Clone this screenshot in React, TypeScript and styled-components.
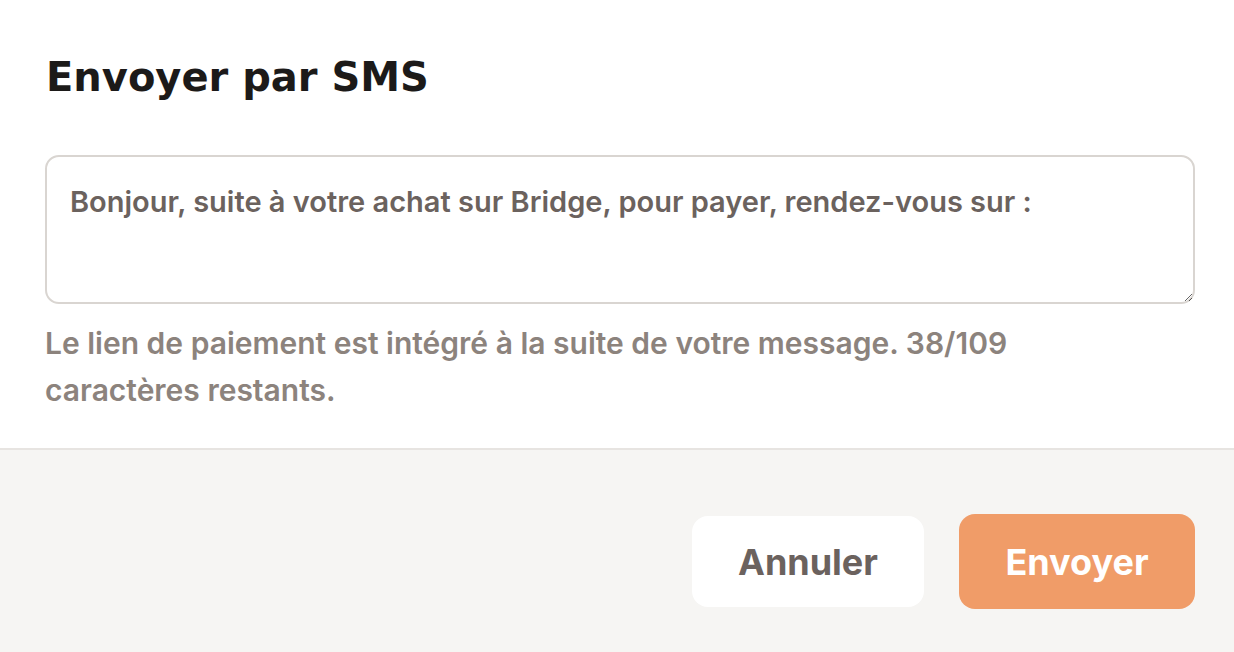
import styled, { createGlobalStyle } from "styled-components";

const GlobalStyle = createGlobalStyle`
  html, body {
    margin: 0;
    padding: 0;
    background: #ffffff;
  }
  body {
    font-family: Inter, "Noto Sans", "Liberation Sans", sans-serif;
  }
  * {
    box-sizing: border-box;
  }
`;

const Modal = styled.div`
  width: 1234px;
  height: 652px;
  display: flex;
  flex-direction: column;
  background: #ffffff;
  overflow: hidden;
`;

const Body = styled.div`
  display: flex;
  flex-direction: column;
  padding: 51px 39px 0 45px;
  height: 450px;
  border-bottom: 2px solid #e7e4e1;
`;

const Title = styled.h1`
  margin: 0 0 52px 1px;
  font-family: "DejaVu Sans", Inter, sans-serif;
  font-size: 40px;
  line-height: 52px;
  font-weight: 700;
  color: #1c1a19;
`;

const MessageBox = styled.textarea`
  width: 100%;
  height: 149px;
  padding: 25px 23px;
  border: 2px solid #d9d5d1;
  border-radius: 14px;
  font-family: inherit;
  font-size: 29px;
  line-height: 40px;
  font-weight: 600;
  color: #6b625e;
  background: #ffffff;
  resize: vertical;
  &:focus {
    outline: none;
    border-color: #f09c68;
  }
`;

const Hint = styled.p`
  margin: 16px 0 0;
  font-size: 30px;
  line-height: 47px;
  font-weight: 600;
  color: #8c837d;
  max-width: 1060px;
`;

const Footer = styled.div`
  flex: 1;
  display: flex;
  justify-content: flex-end;
  align-items: flex-start;
  gap: 35px;
  padding: 64px 39px 0 0;
  background: #f6f5f3;
`;

const Button = styled.button<{ $primary?: boolean }>`
  width: ${(p) => (p.$primary ? "236px" : "232px")};
  height: ${(p) => (p.$primary ? "95px" : "91px")};
  margin-top: ${(p) => (p.$primary ? "0" : "2px")};
  border: none;
  border-radius: 16px;
  font-family: inherit;
  font-size: 36px;
  font-weight: 700;
  cursor: pointer;
  background: ${(p) => (p.$primary ? "#f09c68" : "#ffffff")};
  color: ${(p) => (p.$primary ? "#ffffff" : "#6b625e")};
  &:hover {
    opacity: 0.92;
  }
`;

export default function App() {
  const message =
    "Bonjour, suite à votre achat sur Bridge, pour payer, rendez-vous sur :";
  const max = 109;
  const left = max - message.length - 1;

  return (
    <>
      <GlobalStyle />
      <Modal>
        <Body>
          <Title>Envoyer par SMS</Title>
          <MessageBox defaultValue={message} />
          <Hint>
            Le lien de paiement est intégré à la suite de votre message.{" "}
            {left}/{max} caractères restants.
          </Hint>
        </Body>
        <Footer>
          <Button>Annuler</Button>
          <Button $primary>Envoyer</Button>
        </Footer>
      </Modal>
    </>
  );
}
